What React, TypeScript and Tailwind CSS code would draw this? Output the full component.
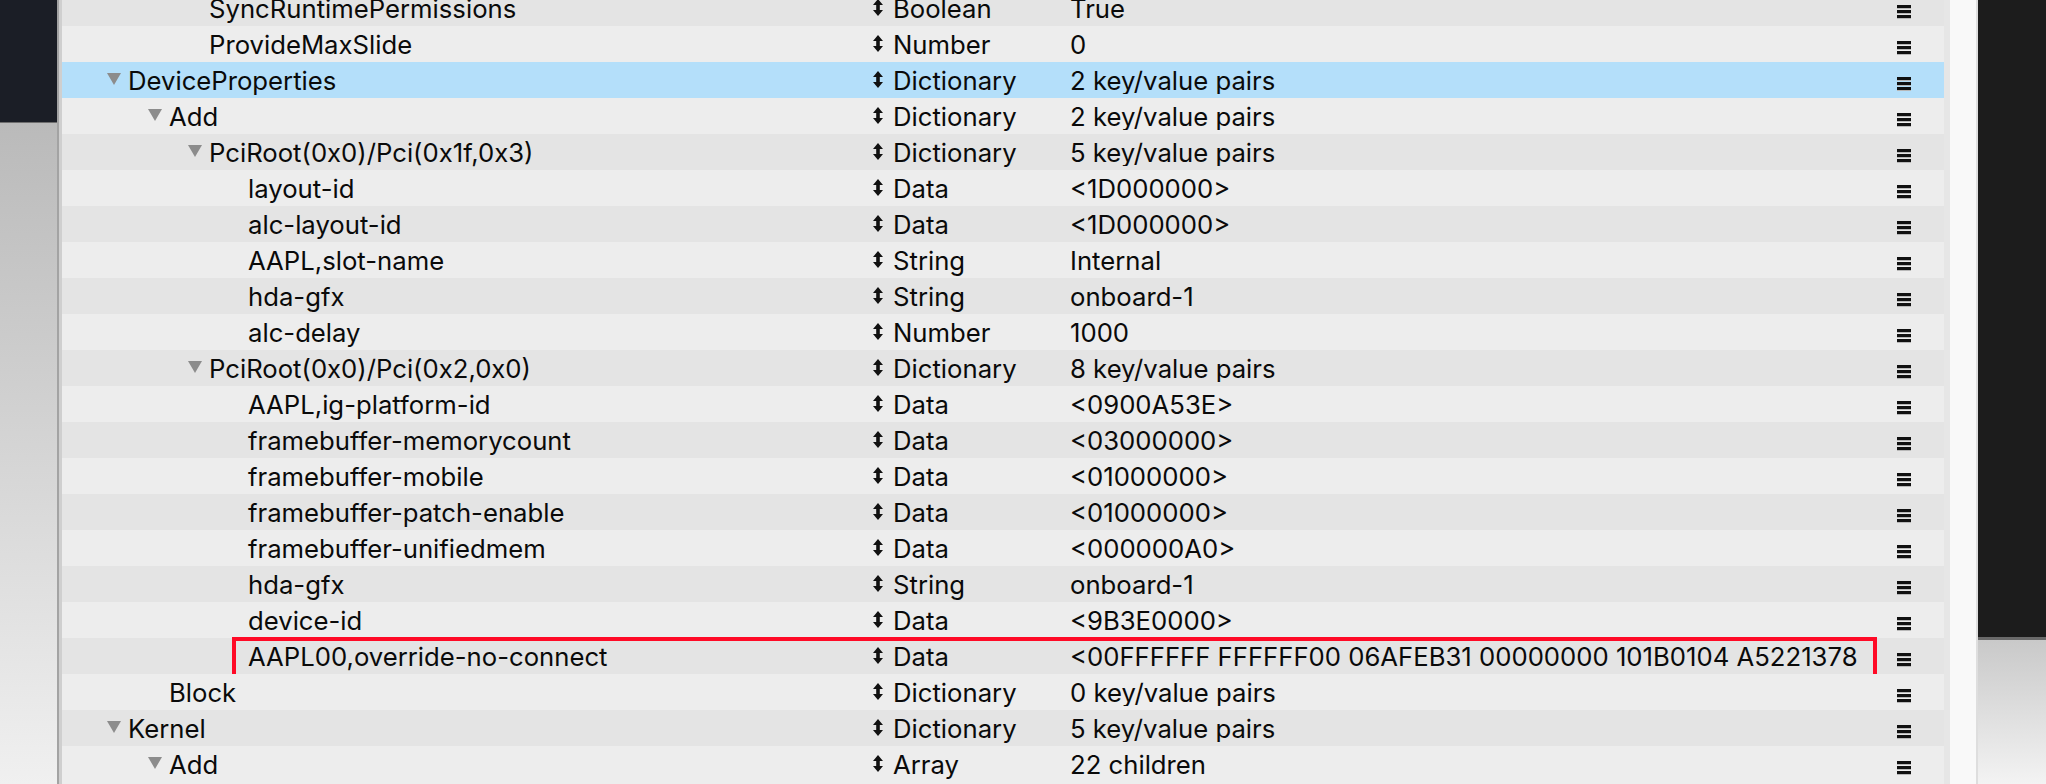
type Row = {
  depth: 0 | 1 | 2 | 3;
  key: string;
  type: string;
  value: string;
  open?: boolean;
  selected?: boolean;
  marked?: boolean;
};

const rows: Row[] = [
  { depth: 2, key: 'SyncRuntimePermissions', type: 'Boolean', value: 'True' },
  { depth: 2, key: 'ProvideMaxSlide', type: 'Number', value: '0' },
  { depth: 0, key: 'DeviceProperties', type: 'Dictionary', value: '2 key/value pairs', open: true, selected: true },
  { depth: 1, key: 'Add', type: 'Dictionary', value: '2 key/value pairs', open: true },
  { depth: 2, key: 'PciRoot(0x0)/Pci(0x1f,0x3)', type: 'Dictionary', value: '5 key/value pairs', open: true },
  { depth: 3, key: 'layout-id', type: 'Data', value: '<1D000000>' },
  { depth: 3, key: 'alc-layout-id', type: 'Data', value: '<1D000000>' },
  { depth: 3, key: 'AAPL,slot-name', type: 'String', value: 'Internal' },
  { depth: 3, key: 'hda-gfx', type: 'String', value: 'onboard-1' },
  { depth: 3, key: 'alc-delay', type: 'Number', value: '1000' },
  { depth: 2, key: 'PciRoot(0x0)/Pci(0x2,0x0)', type: 'Dictionary', value: '8 key/value pairs', open: true },
  { depth: 3, key: 'AAPL,ig-platform-id', type: 'Data', value: '<0900A53E>' },
  { depth: 3, key: 'framebuffer-memorycount', type: 'Data', value: '<03000000>' },
  { depth: 3, key: 'framebuffer-mobile', type: 'Data', value: '<01000000>' },
  { depth: 3, key: 'framebuffer-patch-enable', type: 'Data', value: '<01000000>' },
  { depth: 3, key: 'framebuffer-unifiedmem', type: 'Data', value: '<000000A0>' },
  { depth: 3, key: 'hda-gfx', type: 'String', value: 'onboard-1' },
  { depth: 3, key: 'device-id', type: 'Data', value: '<9B3E0000>' },
  {
    depth: 3,
    key: 'AAPL00,override-no-connect',
    type: 'Data',
    value: '<00FFFFFF FFFFFF00 06AFEB31 00000000 101B0104 A5221378',
    marked: true,
  },
  { depth: 1, key: 'Block', type: 'Dictionary', value: '0 key/value pairs' },
  { depth: 0, key: 'Kernel', type: 'Dictionary', value: '5 key/value pairs', open: true },
  { depth: 1, key: 'Add', type: 'Array', value: '22 children', open: true },
];

// indent per outline level, the 21px disclosure slot sits inside it
const indent = ['pl-[45px]', 'pl-[86px]', 'pl-[126px]', 'pl-[165px]'];

function Disclosure() {
  return (
    <svg width="14" height="12" viewBox="0 0 14 12" className="-mt-[3px]">
      <polygon points="0,0 14,0 7,12" fill="#8c8c8c" />
    </svg>
  );
}

function UpDown() {
  return (
    <svg width="10" height="17" viewBox="0 0 10 17" className="-mt-[2px] mr-[10px] shrink-0">
      <path d="M5 0 L10 6 H6.8 V11 H10 L5 17 L0 11 H3.2 V6 H0 Z" fill="#111" />
    </svg>
  );
}

function Menu() {
  return (
    <div className="mt-[5px] flex w-[14px] flex-col gap-[2px]">
      <div className="h-[3px] bg-[#111] shadow-[0_1px_0_#b8b8b8]" />
      <div className="h-[3px] bg-[#111] shadow-[0_1px_0_#b8b8b8]" />
      <div className="h-[3px] bg-[#111] shadow-[0_1px_0_#b8b8b8]" />
    </div>
  );
}

function PlistRow({ row, index }: { row: Row; index: number }) {
  const bg = row.selected ? 'bg-[#b4dffa]' : index % 2 === 0 ? 'bg-[#e4e4e4]' : 'bg-[#ededed]';
  return (
    <div className={`relative flex h-[36px] items-center pt-[2px] text-[25.7px] leading-none ${bg}`}>
      <div className={`flex w-[811px] items-center ${indent[row.depth]}`}>
        <span className="flex w-[21px] shrink-0">{row.open && <Disclosure />}</span>
        <span className="whitespace-nowrap">{row.key}</span>
      </div>
      <div className="flex w-[197px] items-center">
        <UpDown />
        <span>{row.type}</span>
      </div>
      <div className="w-[827px] overflow-hidden whitespace-nowrap">{row.value}</div>
      <Menu />
      {row.marked && (
        <div className="absolute left-[170px] top-[-1px] h-[41px] w-[1645px] border-[4px] border-[#ff0a26]" />
      )}
    </div>
  );
}

export default function App() {
  return (
    <div className="flex h-[784px] w-[2046px] overflow-hidden bg-[#ededed] font-['Inter',sans-serif] text-[#0a0a0a]">
      {/* window behind, left */}
      <div className="flex w-[57px] flex-col">
        <div className="h-[123px] border-b border-[#6e6e6e] bg-[#1b1e26]" />
        <div className="flex-1 bg-linear-to-b from-[#bababa] to-[#f0f0f0]" />
      </div>
      <div className="w-[2px] bg-[#a3a3a3]" />
      <div className="w-[3px] bg-[#cfcfcf]" />

      <main className="flex-1 overflow-hidden bg-[#ededed]">
        <div className="-mt-[10px]">
          {rows.map((row, i) => (
            <PlistRow key={i} row={row} index={i} />
          ))}
        </div>
      </main>

      {/* scroller + window behind, right */}
      <div className="w-[6px] bg-[#e6e6e6]" />
      <div className="w-[26px] bg-[#f9f9f9]" />
      <div className="w-[2px] bg-[#dedede]" />
      <div className="flex w-[68px] flex-col">
        <div className="h-[637px] bg-[#1c1c1c]" />
        <div className="h-[3px] bg-[#6a6a6a]" />
        <div className="flex-1 bg-linear-to-b from-[#c9c9c9] to-[#f3f3f3]" />
      </div>
    </div>
  );
}
